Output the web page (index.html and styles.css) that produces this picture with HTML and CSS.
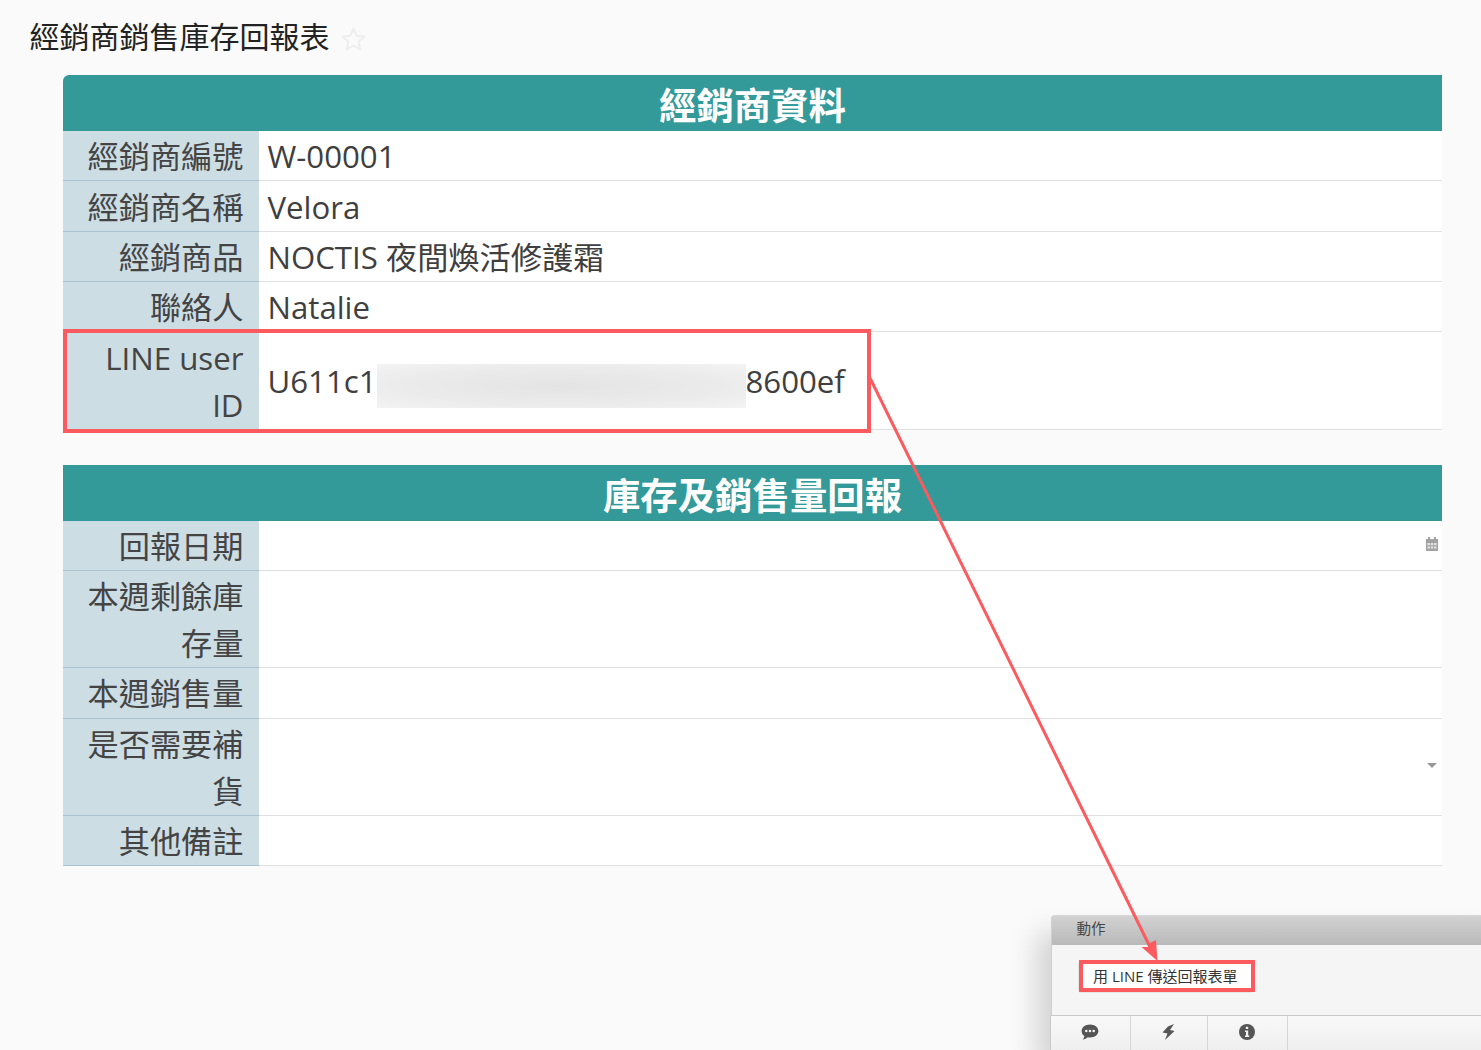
FILE: index.html
```html
<!DOCTYPE html>
<html lang="zh-Hant">
<head>
<meta charset="utf-8">
<title>經銷商銷售庫存回報表</title>
<link rel="stylesheet" href="styles.css">
</head>
<body>
<div class="page">
  <header class="title-bar">
    <h1 class="title">經銷商銷售庫存回報表</h1>
    <svg class="star" viewBox="0 0 26 26" width="27" height="27"><path d="M13 2.500l3.100 6.900 7.400.8-5.500 5 1.500 7.400-6.500-3.800-6.500 3.800 1.500-7.400-5.500-5 7.400-.8z" fill="none" stroke="#eeeeee" stroke-width="2" stroke-linejoin="round"/></svg>
  </header>

  <main class="form">
    <section class="group">
      <h2 class="group-head head-round">經銷商資料</h2>
      <div class="row"><div class="label">經銷商編號</div><div class="value">W-00001</div></div>
      <div class="row"><div class="label">經銷商名稱</div><div class="value">Velora</div></div>
      <div class="row"><div class="label">經銷商品</div><div class="value">NOCTIS 夜間煥活修護霜</div></div>
      <div class="row"><div class="label">聯絡人</div><div class="value">Natalie</div></div>
      <div class="row"><div class="label">LINE user ID</div><div class="value">U611c1<span class="blurred"></span>8600ef</div></div>
    </section>

    <section class="group">
      <h2 class="group-head">庫存及銷售量回報</h2>
      <div class="row"><div class="label">回報日期</div><div class="value value-end">
        <svg class="cal" viewBox="0 0 12 14" width="12" height="14"><path d="M2 0h2v2h4V0h2v2h2v12H0V2h2z" fill="#a3a3a3"/><path d="M1.500 6h2.400v2.200H1.500zM4.800 6h2.400v2.200H4.800zM8.100 6h2.400v2.200H8.100zM1.500 9.400h2.400v2.200H1.500zM4.800 9.400h2.400v2.200H4.800zM8.100 9.400h2.400v2.200H8.100z" fill="#e6e6e6"/></svg>
      </div></div>
      <div class="row"><div class="label">本週剩餘庫存量</div><div class="value"></div></div>
      <div class="row"><div class="label">本週銷售量</div><div class="value"></div></div>
      <div class="row"><div class="label">是否需要補貨</div><div class="value value-end"><span class="caret"></span></div></div>
      <div class="row"><div class="label">其他備註</div><div class="value"></div></div>
    </section>
  </main>

  <aside class="panel">
    <div class="panel-head">動作</div>
    <div class="panel-body"><button class="action" type="button">用 LINE 傳送回報表單</button></div>
    <div class="panel-foot">
      <div class="tab">
        <svg viewBox="0 0 18 16" width="18" height="16"><path d="M9 0.500c4.600 0 8.400 2.800 8.400 6.500S13.600 13.500 9 13.500c-.8 0-1.500-.1-2.200-.2C5.500 14.500 3.700 15.300 1.800 15.400c.9-1 1.500-2.200 1.700-3.300C1.700 11 .6 9.100 .6 7 .6 3.300 4.400.5 9 .5z" fill="#555"/><circle cx="5.300" cy="7" r="1.300" fill="#f2f2f2"/><circle cx="9" cy="7" r="1.300" fill="#f2f2f2"/><circle cx="12.700" cy="7" r="1.300" fill="#f2f2f2"/></svg>
      </div>
      <div class="tab">
        <svg viewBox="0 0 13 16" width="13" height="16"><path d="M12 0L8 6l4.500 1L3 16l2.500-6.500-5-1L6 2.500z" fill="#555"/></svg>
      </div>
      <div class="tab">
        <svg viewBox="0 0 16 16" width="16" height="16"><circle cx="8" cy="8" r="8" fill="#555"/><path d="M6.800 2.800h2.400v2.200H6.800zM6 6.400h3.200v5h1v1.600H6v-1.600h1v-3.400H6z" fill="#f2f2f2"/></svg>
      </div>
    </div>
  </aside>

  <div class="mark mark-row"></div>
  <div class="mark mark-btn"></div>
  <svg class="arrow" viewBox="0 0 1481 1050" width="1481" height="1050">
    <path d="M870 378L1153 953" stroke="#fb5b5f" stroke-width="3" fill="none"/>
    <path d="M1157.500 961L1141.500 947L1149 947L1150 943L1156 940z" fill="#fb5b5f"/>
  </svg>
</div>
</body>
</html>
```
FILE: styles.css
```css
* { box-sizing: border-box; }
html, body { margin: 0; padding: 0; height: 100%; }
body {
  background: #fafafa;
  font-family: "Open Sans", "Noto Sans CJK TC", sans-serif;
  overflow: hidden;
}
.page { position: relative; width: 1481px; height: 1050px; overflow: hidden; }

.title-bar { display: flex; align-items: flex-start; gap: 10.500px; padding: 15px 0 0 29.500px; height: 75px; }
.title { margin: 0; font-size: 30px; line-height: 44px; font-weight: 400; color: #222; }
.star { margin-top: 10.500px; }

.form { margin-left: 63px; width: 1379px; }
.group { margin-bottom: 34.900px; }
.group-head {
  margin: 0;
  height: 56px;
  line-height: 62px;
  background: #339999;
  color: #fff;
  text-align: center;
  font-size: 37.400px;
  font-weight: 700;
  overflow: hidden;
}
.head-round { border-radius: 6px 0 0 0; }

.row { display: flex; font-size: 31.200px; line-height: 47px; color: #444; }
.label {
  flex: 0 0 196.400px;
  padding: 2.260px 15.900px 0.080px 20px;
  text-align: right;
  background: #ccdde4;
  border-bottom: 1px solid #a9c3d1;
}
.value {
  flex: 1;
  padding: 2.260px 8.500px 0.080px 8.100px;
  background: #fff;
  border-bottom: 1px solid #e0e0e0;
  color: #3f3f3f;
  display: flex;
  align-items: center;
  white-space: pre;
}
.value-end { justify-content: flex-end; padding-right: 4px; }
.blurred {
  display: inline-block;
  width: 369px;
  height: 44px;
  margin: 8px 0 0 0;
  background: radial-gradient(ellipse at center, #e4e4e4 0%, #ebebeb 60%, #f3f3f3 100%);
}
.cal { margin-top: -4px; }
.caret {
  width: 0; height: 0;
  margin: -4px 1px 0 0;
  border-left: 5px solid transparent;
  border-right: 5px solid transparent;
  border-top: 5px solid #999;
}

.panel {
  position: absolute;
  left: 1051px;
  top: 915px;
  width: 440px;
  height: 135px;
  border-top: 1px solid #d8d8d8;
  border-left: 1px solid #cfcfcf;
  border-radius: 4px 0 0 0;
  background: #f5f5f5;
  box-shadow: -14px 18px 28px rgba(0,0,0,.16);
}
.panel-head {
  height: 29px;
  line-height: 25px;
  padding-left: 24.500px;
  font-size: 14.500px;
  color: #444;
  background: linear-gradient(#d2d2d2, #b9b9b9);
}
.panel-body { height: 70px; padding: 16px 0 0 26px; }
.action {
  display: block;
  width: 176px;
  height: 32px;
  padding: 0 0 3px 14px;
  border: 1px solid #e6e6e6;
  border-radius: 3px;
  background: #fff;
  color: #333;
  font-family: inherit;
  font-size: 15px;
  line-height: 26px;
  text-align: left;
}
.panel-foot {
  display: flex;
  height: 36px;
  margin-left: -2px;
  border-top: 1px solid #c9c9c9;
  border-left: 1px solid #c9c9c9;
  background: linear-gradient(#f8f8f8, #efefef);
}
.tab {
  display: flex;
  align-items: center;
  justify-content: center;
  height: 100%;
  width: 80px;
  padding: 0 1px 4px 0;
  border-right: 1px solid #d6d6d6;
}
.tab:nth-child(2) { width: 77px; }

.mark { position: absolute; border: 4.500px solid #fb5b5f; }
.mark-row { left: 63px; top: 329px; width: 808px; height: 104px; }
.mark-btn { left: 1079px; top: 960px; width: 176px; height: 32px; }
.arrow { position: absolute; left: 0; top: 0; pointer-events: none; }
```
